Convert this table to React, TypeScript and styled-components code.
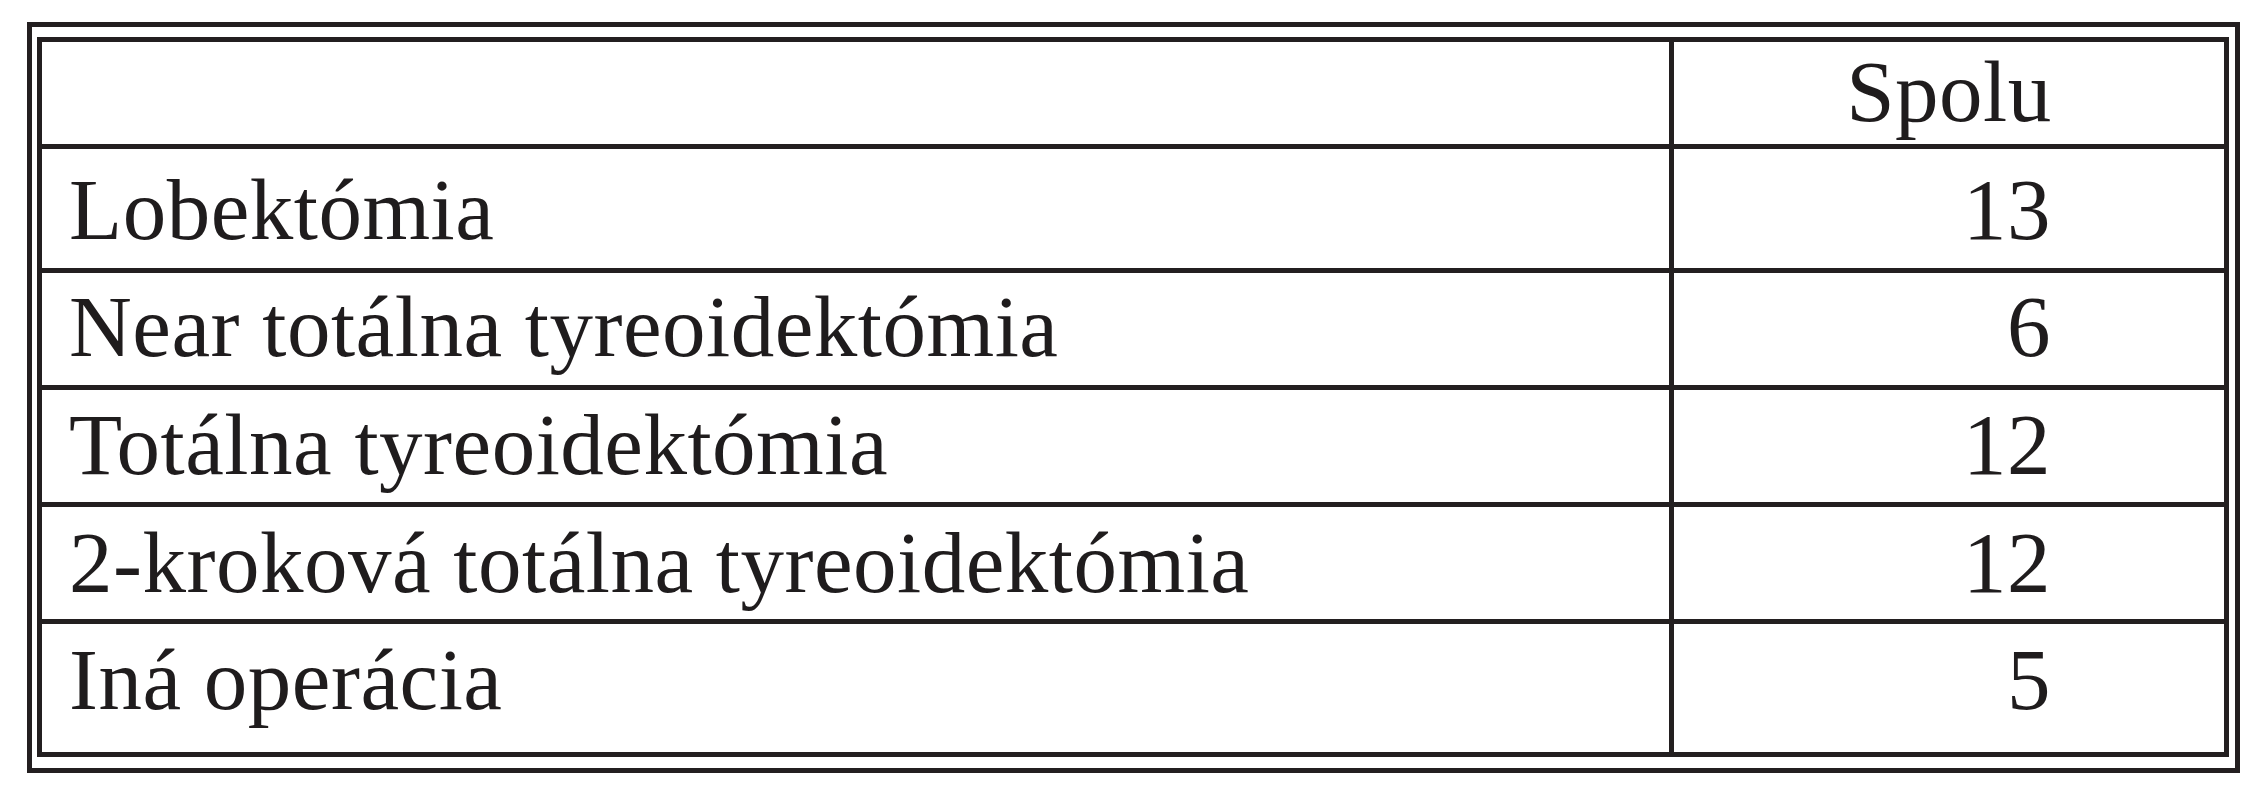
import React from "react";
import styled, { createGlobalStyle } from "styled-components";

const GlobalStyle = createGlobalStyle`
  html, body {
    margin: 0;
    padding: 0;
    background: #ffffff;
  }
`;

const Page = styled.div`
  padding: 22px 0 0 27px;
  width: 2256px;
  height: 800px;
  box-sizing: border-box;
  background: #ffffff;
`;

const OuterFrame = styled.div`
  box-sizing: border-box;
  width: 2213px;
  height: 751px;
  border: 5px solid #231f20;
  padding: 10px 6px 11px 5px;
`;

const InnerFrame = styled.div`
  box-sizing: border-box;
  width: 100%;
  height: 100%;
  border: 5px solid #231f20;
  display: flex;
  flex-direction: column;
`;

const Row = styled.div<{ $h: number; $first?: boolean }>`
  box-sizing: border-box;
  height: ${(p) => p.$h}px;
  display: grid;
  grid-template-columns: 1627px 1fr;
  border-top: ${(p) => (p.$first ? "0" : "5px solid #231f20")};
`;

const Cell = styled.div<{ $pt: number }>`
  box-sizing: border-box;
  padding-top: ${(p) => p.$pt}px;
  font-family: "Liberation Serif", "Times New Roman", serif;
  font-size: 87px;
  line-height: 96px;
  letter-spacing: 0.5px;
  color: #1f1c1d;
  white-space: nowrap;
`;

const LabelCell = styled(Cell)`
  padding-left: 27px;
`;

const ValueCell = styled(Cell)<{ $center?: boolean }>`
  border-left: 5px solid #231f20;
  text-align: ${(p) => (p.$center ? "center" : "right")};
  padding-right: ${(p) => (p.$center ? 0 : 173)}px;
`;

const rows = [
  { label: "Lobektómia", value: "13", h: 124, pt: 13 },
  { label: "Near totálna tyreoidektómia", value: "6", h: 117, pt: 6 },
  { label: "Totálna tyreoidektómia", value: "12", h: 117, pt: 7 },
  { label: "2-kroková totálna tyreoidektómia", value: "12", h: 117, pt: 8 },
  { label: "Iná operácia", value: "5", h: 133, pt: 8 },
];

export default function App() {
  return (
    <>
      <GlobalStyle />
      <Page>
        <OuterFrame>
          <InnerFrame>
            <Row $h={102} $first>
              <LabelCell $pt={2} />
              <ValueCell $pt={2} $center>
                Spolu
              </ValueCell>
            </Row>
            {rows.map((r) => (
              <Row key={r.label} $h={r.h}>
                <LabelCell $pt={r.pt}>{r.label}</LabelCell>
                <ValueCell $pt={r.pt}>{r.value}</ValueCell>
              </Row>
            ))}
          </InnerFrame>
        </OuterFrame>
      </Page>
    </>
  );
}
